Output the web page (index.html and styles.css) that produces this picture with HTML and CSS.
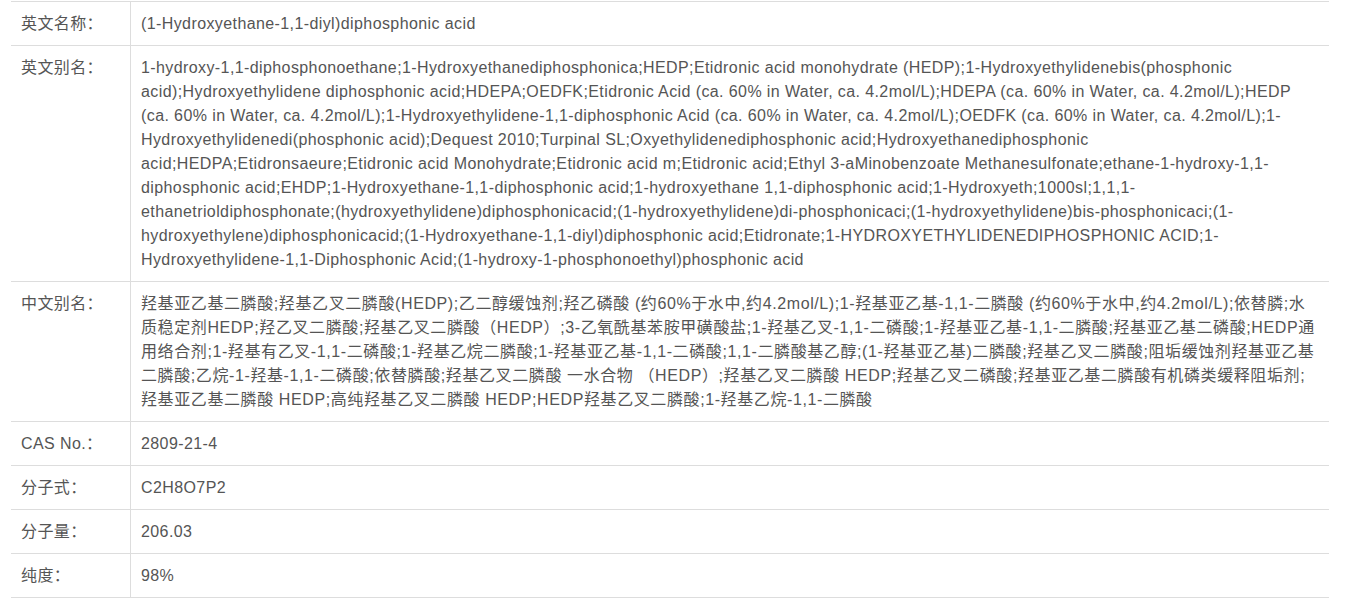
FILE: index.html
```html
<!DOCTYPE html>
<html lang="zh">
<head>
<meta charset="utf-8">
<link rel="stylesheet" href="styles.css">
</head>
<body>
<div class="wrap">
<table class="info">
<tr><th>英文名称：</th><td>(1-Hydroxyethane-1,1-diyl)diphosphonic acid</td></tr>
<tr><th>英文别名：</th><td>1-hydroxy-1,1-diphosphonoethane;1-Hydroxyethanediphosphonica;HEDP;Etidronic acid monohydrate (HEDP);1-Hydroxyethylidenebis(phosphonic acid);Hydroxyethylidene diphosphonic acid;HDEPA;OEDFK;Etidronic Acid (ca. 60% in Water, ca. 4.2mol/L);HDEPA (ca. 60% in Water, ca. 4.2mol/L);HEDP (ca. 60% in Water, ca. 4.2mol/L);1-Hydroxyethylidene-1,1-diphosphonic Acid (ca. 60% in Water, ca. 4.2mol/L);OEDFK (ca. 60% in Water, ca. 4.2mol/L);1-Hydroxyethylidenedi(phosphonic acid);Dequest 2010;Turpinal SL;Oxyethylidenediphosphonic acid;Hydroxyethanediphosphonic acid;HEDPA;Etidronsaeure;Etidronic acid Monohydrate;Etidronic acid m;Etidronic acid;Ethyl 3-aMinobenzoate Methanesulfonate;ethane-1-hydroxy-1,1-diphosphonic acid;EHDP;1-Hydroxyethane-1,1-diphosphonic acid;1-hydroxyethane 1,1-diphosphonic acid;1-Hydroxyeth;1000sl;1,1,1-ethanetrioldiphosphonate;(hydroxyethylidene)diphosphonicacid;(1-hydroxyethylidene)di-phosphonicaci;(1-hydroxyethylidene)bis-phosphonicaci;(1-hydroxyethylene)diphosphonicacid;(1-Hydroxyethane-1,1-diyl)diphosphonic acid;Etidronate;1-HYDROXYETHYLIDENEDIPHOSPHONIC ACID;1-Hydroxyethylidene-1,1-Diphosphonic Acid;(1-hydroxy-1-phosphonoethyl)phosphonic acid</td></tr>
<tr><th>中文别名：</th><td class="zh">羟基亚乙基二膦酸;羟基乙叉二膦酸(HEDP);乙二醇缓蚀剂;羟乙磷酸 (约60%于水中,约4.2mol/L);1-羟基亚乙基-1,1-二膦酸 (约60%于水中,约4.2mol/L);依替膦;水质稳定剂HEDP;羟乙叉二膦酸;羟基乙叉二膦酸（HEDP）;3-乙氧酰基苯胺甲磺酸盐;1-羟基乙叉-1,1-二磷酸;1-羟基亚乙基-1,1-二膦酸;羟基亚乙基二磷酸;HEDP通用络合剂;1-羟基有乙叉-1,1-二磷酸;1-羟基乙烷二膦酸;1-羟基亚乙基-1,1-二磷酸;1,1-二膦酸基乙醇;(1-羟基亚乙基)二膦酸;羟基乙叉二膦酸;阻垢缓蚀剂羟基亚乙基二膦酸;乙烷-1-羟基-1,1-二磷酸;依替膦酸;羟基乙叉二膦酸 一水合物 （HEDP）;羟基乙叉二膦酸 HEDP;羟基乙叉二磷酸;羟基亚乙基二膦酸有机磷类缓释阻垢剂;羟基亚乙基二膦酸 HEDP;高纯羟基乙叉二膦酸 HEDP;HEDP羟基乙叉二膦酸;1-羟基乙烷-1,1-二膦酸</td></tr>
<tr><th>CAS No.：</th><td>2809-21-4</td></tr>
<tr><th>分子式：</th><td>C2H8O7P2</td></tr>
<tr><th>分子量：</th><td>206.03</td></tr>
<tr><th>纯度：</th><td>98%</td></tr>
</table>
</div>
</body>
</html>
```

FILE: styles.css
```css
html, body {
  margin: 0;
  padding: 0;
  background: #fff;
}
.wrap {
  padding: 1px 0 0 11px;
}
.info {
  width: 1318px;
  border-collapse: collapse;
  font-family: "Liberation Sans", Arial, "Noto Sans CJK SC", sans-serif;
  font-size: 16px;
  letter-spacing: 0.4px;
  line-height: 24px;
  color: #555;
}
.info th, .info td {
  border-top: 1px solid #ddd;
  border-bottom: 1px solid #ddd;
  padding: 10px 10px 9px;
  text-align: left;
  vertical-align: top;
  font-weight: normal;
}
.info th {
  width: 99px;
  border-right: 1px solid #ddd;
  white-space: nowrap;
}
.info td.zh {
  letter-spacing: 0.6px;
}
```
